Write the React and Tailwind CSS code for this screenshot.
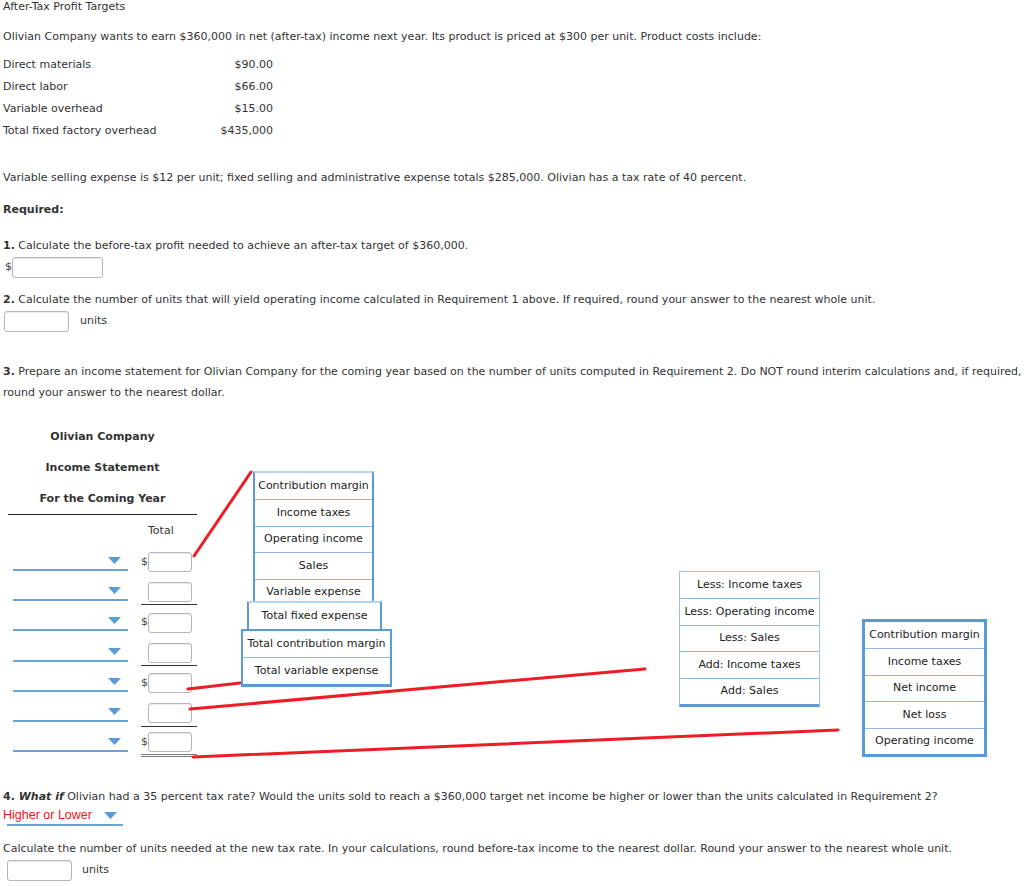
import React from "react";

const COSTS = [
  ["Direct materials", "$90.00"],
  ["Direct labor", "$66.00"],
  ["Variable overhead", "$15.00"],
  ["Total fixed factory overhead", "$435,000"],
];

// rows of the income statement: has $ sign, underline below value
const ROWS = [
  { dollar: true, line: "" },
  { dollar: false, line: "single" },
  { dollar: true, line: "" },
  { dollar: false, line: "single" },
  { dollar: true, line: "" },
  { dollar: false, line: "single" },
  { dollar: true, line: "double" },
];

function Caret({ className = "" }) {
  return (
    <svg width="13" height="7" viewBox="0 0 13 7" className={className}>
      <path d="M0 0 L13 0 L6.5 7 Z" fill="#5a9bd5" />
    </svg>
  );
}

function Box({ w = "w-[44px]", h = "h-[20px]" }) {
  return (
    <div className={`${w} ${h} rounded-[3px] border border-[#b5b5b5] bg-white shadow-[inset_0_1px_1px_rgba(0,0,0,0.08)]`} />
  );
}

function Menu({ items, className }) {
  return (
    <div className={`absolute bg-white ${className}`}>
      {items.map((t, i) => (
        <div
          key={t}
          className={`h-[26.4px] flex items-center justify-center whitespace-nowrap text-[#222] ${
            i > 0 ? "border-t border-[#8fb7df]" : ""
          }`}
        >
          {t}
        </div>
      ))}
    </div>
  );
}

export default function App() {
  return (
    <div
      className="relative w-[1024px] h-[886px] bg-white text-[11px] text-[#333] overflow-hidden"
      style={{ fontFamily: "Verdana, 'DejaVu Sans', sans-serif" }}
    >
      <div className="px-[3px]">
        <div className="leading-[14px]">After-Tax Profit Targets</div>
        <p className="mt-[16px] leading-[14px]">
          Olivian Company wants to earn $360,000 in net (after-tax) income next year. Its product is priced at $300 per unit. Product costs include:
        </p>

        <div className="mt-[10px] grid grid-cols-[200px_70px]">
          {COSTS.map(([k, v]) => (
            <React.Fragment key={k}>
              <div className="h-[22px] leading-[22px]">{k}</div>
              <div className="h-[22px] leading-[22px] text-right">{v}</div>
            </React.Fragment>
          ))}
        </div>

        <p className="mt-[29px] leading-[14px]">
          Variable selling expense is $12 per unit; fixed selling and administrative expense totals $285,000. Olivian has a tax rate of 40 percent.
        </p>
        <p className="mt-[18px] leading-[14px] font-bold">Required:</p>

        <p className="mt-[22px] leading-[14px]">
          <b>1.</b> Calculate the before-tax profit needed to achieve an after-tax target of $360,000.
        </p>
        <div className="mt-[4px] flex items-center pl-[2px]">
          <span className="w-[7px]">$</span>
          <Box w="w-[91px]" h="h-[21px]" />
        </div>

        <p className="mt-[15px] leading-[14px]">
          <b>2.</b> Calculate the number of units that will yield operating income calculated in Requirement 1 above. If required, round your answer to the nearest whole unit.
        </p>
        <div className="mt-[4px] flex items-center pl-[1px] gap-[11px]">
          <Box w="w-[65px]" h="h-[21px]" />
          <span>units</span>
        </div>

        <p className="mt-[29px] leading-[21px]">
          <span className="whitespace-nowrap">
            <b>3.</b> Prepare an income statement for Olivian Company for the coming year based on the number of units computed in Requirement 2. Do NOT round interim calculations and, if required,
          </span>
          <br />
          round your answer to the nearest dollar.
        </p>
      </div>

      {/* income statement */}
      <div className="mt-[18px] ml-[8px] w-[189px]">
        <div className="border-b-[1.5px] border-[#222] text-center font-bold">
          <div className="h-[31px] leading-[31px]">Olivian Company</div>
          <div className="h-[31px] leading-[31px]">Income Statement</div>
          <div className="h-[31px] leading-[31px]">For the Coming Year</div>
        </div>
        <div className="h-[32px] flex items-center pl-[140px]">Total</div>
        {ROWS.map((r, i) => (
          <div key={i} className="h-[30.3px] flex items-center">
            <div className="ml-[5px] w-[115px] h-[17px] border-b-[2px] border-[#6aa3d8] flex items-start justify-end pr-[7px] pt-[3px]">
              <Caret />
            </div>
            <div
              className={`ml-[13px] w-[56px] h-[26px] flex items-center ${
                r.line === "single" ? "border-b border-[#333]" : ""
              } ${r.line === "double" ? "border-b-[3px] border-double border-[#777]" : ""}`}
            >
              <span className="w-[7px] text-[#444]">{r.dollar ? "$" : ""}</span>
              <Box />
            </div>
          </div>
        ))}
      </div>

      <div className="px-[3px]">
        <p className="mt-[31px] leading-[14px]">
          <b>
            4. <i>What if</i>
          </b>{" "}
          Olivian had a 35 percent tax rate? Would the units sold to reach a $360,000 target net income be higher or lower than the units calculated in Requirement 2?
        </p>
        <div className="mt-[3px] ml-[4px] w-[116px] h-[19px] border-b-[2px] border-[#6aa3d8] flex items-center justify-between pr-[6px]">
          <span className="-ml-[4px] text-[12.5px] text-[#f01520]" style={{ fontFamily: "'Liberation Sans', Arial, sans-serif" }}>
            Higher or Lower
          </span>
          <Caret />
        </div>
        <p className="mt-[16px] leading-[14px]">
          Calculate the number of units needed at the new tax rate. In your calculations, round before-tax income to the nearest dollar. Round your answer to the nearest whole unit.
        </p>
        <div className="mt-[4px] flex items-center pl-[4px] gap-[10px]">
          <Box w="w-[65px]" h="h-[21px]" />
          <span>units</span>
        </div>
      </div>

      {/* annotation lines */}
      <svg className="absolute inset-0 pointer-events-none" width="1024" height="886">
        <g stroke="#ee1c25" strokeWidth="3" strokeLinecap="round">
          <line x1="194" y1="556" x2="251" y2="472" />
          <line x1="188" y1="689" x2="240" y2="683" />
          <line x1="190" y1="709" x2="645" y2="669" />
          <line x1="193" y1="757" x2="838" y2="730" />
        </g>
      </svg>

      {/* open dropdown lists */}
      <Menu
        className="left-[253px] top-[471px] w-[121px] border-x-2 border-t-2 border-x-[#5a9bd5] border-t-[#b9d4ee]"
        items={["Contribution margin", "Income taxes", "Operating income", "Sales", "Variable expense"]}
      />
      <Menu
        className="left-[247px] top-[601px] w-[135px] border-x-2 border-t-2 border-x-[#5a9bd5] border-t-[#b9d4ee]"
        items={["Total fixed expense"]}
      />
      <Menu
        className="left-[241px] top-[629px] w-[151px] border-x-2 border-t-2 border-b-[3px] border-x-[#5a9bd5] border-t-[#5a9bd5] border-b-[#5a9bd5]"
        items={["Total contribution margin", "Total variable expense"]}
      />
      <Menu
        className="left-[679px] top-[571px] w-[141px] border-x border-t border-b-[3px] border-x-[#9dc3e6] border-t-[#9dc3e6] border-b-[#5a9bd5]"
        items={["Less: Income taxes", "Less: Operating income", "Less: Sales", "Add: Income taxes", "Add: Sales"]}
      />
      <Menu
        className="left-[862px] top-[619px] w-[125px] border-[3px] border-[#5a9bd5]"
        items={["Contribution margin", "Income taxes", "Net income", "Net loss", "Operating income"]}
      />
    </div>
  );
}
